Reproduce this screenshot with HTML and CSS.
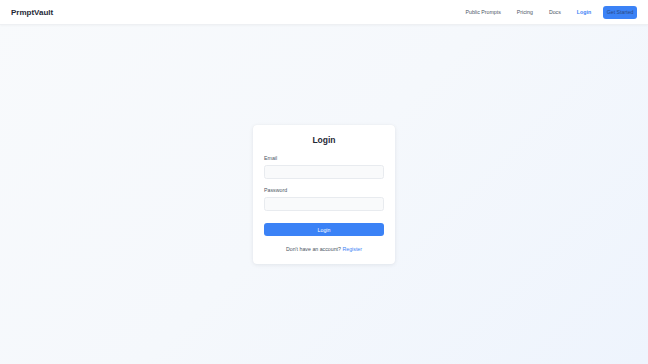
FILE: index.html
```html
<!DOCTYPE html>
<html lang="en">
<head>
<meta charset="utf-8">
<title>PrmptVault - Login</title>
<link rel="stylesheet" href="styles.css">
</head>
<body>
<header class="topbar">
  <div class="logo">PrmptVault</div>
  <nav class="nav">
    <a class="nav-link" href="#">Public Prompts</a>
    <a class="nav-link" href="#">Pricing</a>
    <a class="nav-link" href="#">Docs</a>
    <a class="nav-link active" href="#">Login</a>
    <a class="nav-btn" href="#">Get Started</a>
  </nav>
</header>
<main class="main">
  <form class="card">
    <h1 class="title">Login</h1>
    <label class="label" for="email">Email</label>
    <input class="input" id="email" type="email">
    <label class="label label-2" for="password">Password</label>
    <input class="input" id="password" type="password">
    <button class="submit" type="button">Login</button>
    <p class="footer">Don't have an account? <a class="link" href="#">Register</a></p>
  </form>
</main>
</body>
</html>
```
FILE: styles.css
```css
* { box-sizing: border-box; }
html, body { margin: 0; padding: 0; height: 100%; }
body {
  font-family: "Liberation Sans", Arial, sans-serif;
  background: linear-gradient(135deg, #f8fafc 0%, #f5f8fc 50%, #eef4fd 100%);
  color: #1f2937;
  display: flex;
  flex-direction: column;
}
.topbar {
  height: 25px;
  background: #ffffff;
  border-bottom: 1px solid #eef0f3;
  box-shadow: 0 1px 2px rgba(0,0,0,0.03);
  display: flex;
  align-items: center;
  justify-content: space-between;
  padding: 0 11px;
}
.logo {
  font-size: 8px;
  font-weight: 700;
  color: #1f2937;
}
.nav {
  display: flex;
  align-items: center;
  gap: 16px;
}
.nav-link {
  font-size: 5.25px;
  color: #4b5563;
  text-decoration: none;
}
.nav-link.active {
  color: #3b82f6;
  font-weight: 700;
}
.nav-btn {
  margin-left: -4px;
  font-size: 5.25px;
  color: #2c4a85;
  background: #3b82f6;
  text-decoration: none;
  height: 13px;
  line-height: 13px;
  padding: 0 3.5px;
  border-radius: 3px;
  margin-top: 1px;
}
.main {
  flex: 1;
  display: flex;
  align-items: flex-start;
  justify-content: center;
  padding-top: 100px;
}
.card {
  width: 142px;
  height: 139px;
  background: #ffffff;
  border-radius: 4px;
  box-shadow: 0 1px 4px rgba(15, 23, 42, 0.08), 0 0 1px rgba(15,23,42,0.06);
  padding: 9px 11px 11px;
  display: flex;
  flex-direction: column;
  margin: 0;
}
.title {
  margin: 0;
  font-size: 8.5px;
  line-height: 12px;
  font-weight: 700;
  text-align: center;
  color: #1f2937;
}
.label {
  margin-top: 8px;
  font-size: 5.25px;
  line-height: 8px;
  color: #4b5563;
}
.label-2 { margin-top: 7px; }
.input {
  margin-top: 3px;
  height: 14px;
  width: 100%;
  background: #f9fafb;
  border: 0.5px solid #e8ebef;
  border-radius: 2.5px;
  padding: 0;
}
.submit {
  margin-top: 12px;
  height: 14px;
  width: 100%;
  background: #3b82f6;
  color: #ffffff;
  border: none;
  border-radius: 3px;
  font-family: "Liberation Sans", Arial, sans-serif;
  font-size: 5.25px;
  padding: 0;
}
.footer {
  margin: 9px 0 0;
  font-size: 5.25px;
  line-height: 8px;
  text-align: center;
  color: #4b5563;
}
.link {
  color: #3b82f6;
  text-decoration: none;
}
```
